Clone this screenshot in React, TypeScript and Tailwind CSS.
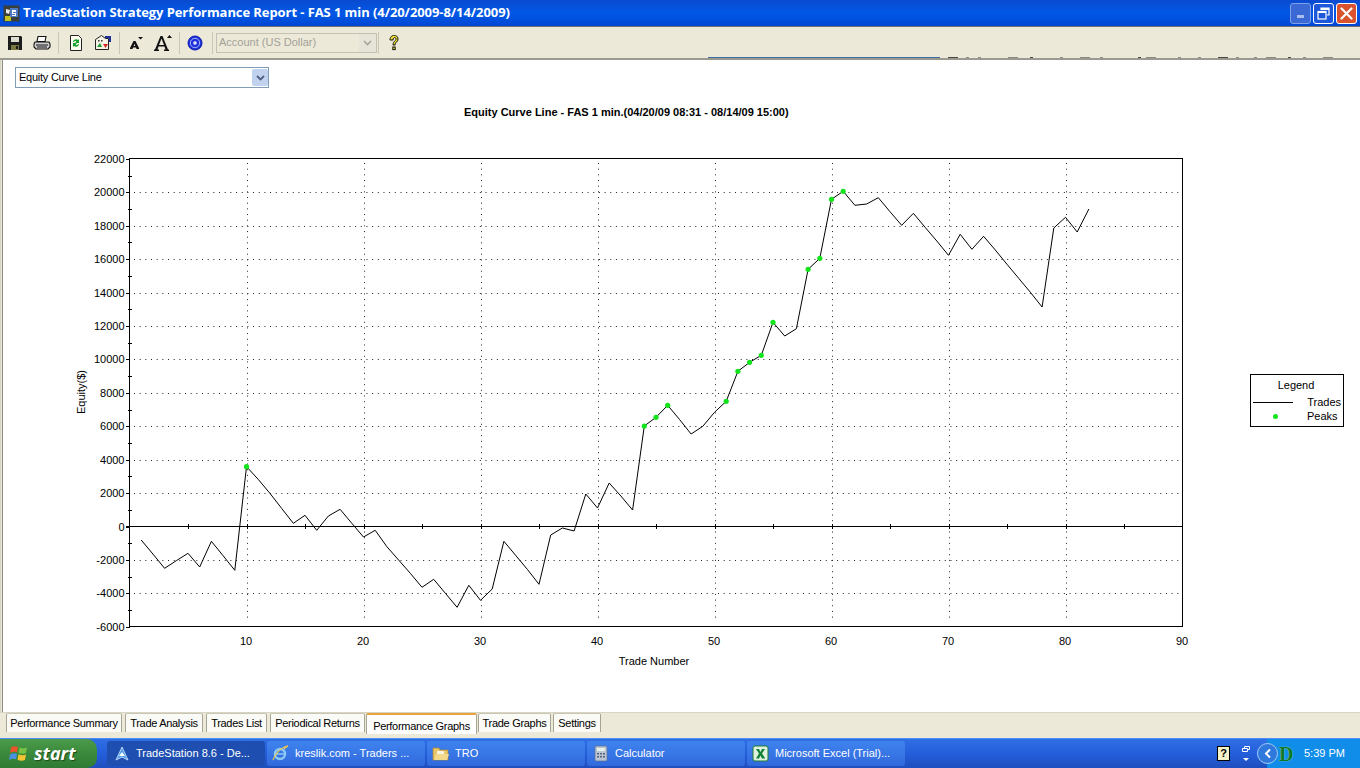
import { Fragment } from "react";

// y pixel of each trade, trade 1 first
const EQUITY = [
  540, 554, 568.3, 560.7, 553.3, 567, 541.3, 555.7, 570.3, 466.7, 479.3, 493.3, 508.3, 523.3, 515.3, 530.3, 516, 509.3,
  523.3, 537, 530.3, 546.7, 560, 573.3, 587.3, 579.3, 593.3, 607.3, 585.3, 600.3, 589, 541.3, 555.3, 569.3, 584.3, 535,
  528, 531, 494, 508, 483, 496, 510, 426, 417.3, 405.3, 419.3, 434, 426.3, 412.3, 401.3, 371.3, 362.3, 355.3, 322.3,
  336, 328.7, 269.3, 258.3, 199.3, 191.3, 205.3, 204, 197.7, 211.7, 225.3, 213.3, 227.3, 241, 255.3, 234.3, 249.3,
  236.3, 250, 264.3, 278.3, 292.3, 307, 228, 217.3, 232, 209,
];
const PEAKS = [10, 44, 45, 46, 51, 52, 53, 54, 55, 58, 59, 60, 61];

const tradeX = (n: number) => 129.5 + n * 11.7;
const equityY = (v: number) => 526.5 - (v * 468) / 28000;

const Y_LABELS = [22000, 20000, 18000, 16000, 14000, 12000, 10000, 8000, 6000, 4000, 2000, 0, -2000, -4000, -6000];
const X_LABELS = [10, 20, 30, 40, 50, 60, 70, 80, 90];
const MINOR = [21000, 19000, 17000, 15000, 13000, 11000, 9000, 7000, 5000, 3000, 1000, -1000, -3000, -5000];

const TABS = [
  { label: "Performance Summary", w: "w-[116px]", ml: "ml-0" },
  { label: "Trade Analysis", w: "w-[78px]", ml: "ml-[3px]" },
  { label: "Trades List", w: "w-[61px]", ml: "ml-[3px]" },
  { label: "Periodical Returns", w: "w-[95px]", ml: "ml-[3px]" },
  { label: "Performance Graphs", w: "w-[111px]", ml: "ml-px", active: true },
  { label: "Trade Graphs", w: "w-[73px]", ml: "ml-px" },
  { label: "Settings", w: "w-[48px]", ml: "ml-[2px]" },
];

function AppIcon() {
  return (
    <svg width="17" height="17" viewBox="0 0 17 17">
      <rect x="0.5" y="0.5" width="16" height="16" fill="#3a3f3a" />
      <rect x="2" y="11" width="6" height="5" fill="#c2c21f" />
      <rect x="7" y="3" width="8" height="9" fill="#4d79c7" />
      <path d="M3 4l4 1-1 4-3-1z" fill="#e8e8e8" />
      <path d="M9 5h4v2h-3v1h3v3H9v-1h3V9H9z" fill="#fff" />
    </svg>
  );
}

function SaveIcon() {
  return (
    <svg width="16" height="16" viewBox="0 0 16 16">
      <path d="M1 1h13l1 1v13H1z" fill="#1c1c1c" />
      <rect x="4" y="2" width="8" height="5" fill="#dcdcd0" />
      <rect x="4" y="10" width="8" height="5" fill="#77773f" />
      <rect x="9" y="11" width="2" height="3" fill="#1c1c1c" />
    </svg>
  );
}

function PrintIcon() {
  return (
    <svg width="18" height="16" viewBox="0 0 18 16" fill="#fff" stroke="#111" strokeWidth="1.1">
      <path d="M5 1.5h8l-1 5H4z" />
      <path d="M2 7h14l1 2v3l-2 2H3l-2-2V9z" fill="#cfcfcf" />
      <path d="M3 10h12M4 12h10" fill="none" />
    </svg>
  );
}

function RefreshDocIcon() {
  return (
    <svg width="16" height="18" viewBox="0 0 16 18">
      <path d="M2.5 1.5h8l3 3v12h-11z" fill="#fdfdf0" stroke="#222" />
      <path d="M5 8a3 3 0 0 1 5-2l1-1v4H7l1.500-1.500A1.500 1.500 0 0 0 6 8z" fill="#17a02c" />
      <path d="M11 10a3 3 0 0 1-5 2l-1 1V9h4l-1.500 1.500A1.500 1.500 0 0 0 10 10z" fill="#17a02c" />
    </svg>
  );
}

function ChartDocIcon() {
  return (
    <svg width="18" height="17" viewBox="0 0 18 17">
      <path d="M1.500 5.500l6-4 4 3h3v11h-13z" fill="#f4f2e4" stroke="#222" />
      <path d="M3 13l3-4 2 4z" fill="#1e9a33" />
      <path d="M9 10h5l-2.500 4z" fill="#d8262b" />
      <rect x="4" y="6" width="1.500" height="1.500" fill="#333" />
      <rect x="7" y="6" width="1.500" height="1.500" fill="#333" />
      <path d="M11 2h6v6h-2V4h-4z" fill="#1c2f9c" />
    </svg>
  );
}

function FontDownIcon() {
  return (
    <svg width="15" height="14" viewBox="0 0 15 14">
      <path d="M1 13h2.500l.500-1.500h3l.500 1.500H10v-1L6.500 5h-2L1 12zM4.700 10 5.500 7.700 6.300 10z" fill="#111" />
      <path d="M9 1h5l-2.500 2.500z" fill="#111" />
    </svg>
  );
}

function FontUpIcon() {
  return (
    <svg width="20" height="18" viewBox="0 0 20 18">
      <path d="M1 17h5v-1.500H4.500l1-3h6l1 3H11V17h5v-1.500h-1L9.500 2h-2L2 15.500H1zM6 11l2.500-6.500L11 11z" fill="#111" />
      <path d="M14 4l2.500-3L19 4z" fill="#111" />
    </svg>
  );
}

function TargetIcon() {
  return (
    <svg width="16" height="16" viewBox="0 0 16 16" fill="none">
      <circle cx="8" cy="8" r="7" fill="#1c2fd8" stroke="#0a1bb0" />
      <circle cx="8" cy="8" r="4.700" stroke="#a9b6f7" />
      <circle cx="8" cy="8" r="2.300" fill="#dfe4ff" stroke="#1c2fd8" />
    </svg>
  );
}

function StartFlag() {
  return (
    <svg width="20" height="19" viewBox="0 0 20 19">
      <path d="M2 3.500Q5 1.500 9 3L8 8.500Q5 7 1 9z" fill="#e8552b" />
      <path d="M10.500 3.500Q14 5 18 3.500L17 9q-4 1.500-7.500-.300z" fill="#76c043" />
      <path d="M1 10.500q4-2 7 -.500L7 15.500q-3-1.500-7 .500z" fill="#4a90e2" />
      <path d="M9.500 10.200q3.500 1.800 7.500.300l-1 5.500q-4 1.500-7.500-.300z" fill="#f4c430" />
    </svg>
  );
}

function TaskIcon({ kind }: { kind: "ts" | "ie" | "folder" | "calc" | "excel" }) {
  if (kind === "ts") {
    return (
      <svg width="16" height="16" viewBox="0 0 16 16">
        <path d="M8 1l6 13-6-3-6 3z" fill="#4f9de8" stroke="#dbe9fb" strokeWidth="0.800" />
        <path d="M8 6l3 4H5z" fill="#fff" />
      </svg>
    );
  }
  if (kind === "ie") {
    return (
      <svg width="17" height="17" viewBox="0 0 17 17" fill="none">
        <circle cx="8" cy="9" r="5" stroke="#8ccaf5" strokeWidth="2.400" />
        <path d="M4 9h8" stroke="#8ccaf5" strokeWidth="1.500" />
        <path d="M1 15C3 9 9 2 16 1c-2 1-3 2-4 3" stroke="#f2c94c" strokeWidth="1.100" />
      </svg>
    );
  }
  if (kind === "folder") {
    return (
      <svg width="17" height="15" viewBox="0 0 17 15">
        <path d="M1 2h6l1 2h8v10H1z" fill="#e9c668" stroke="#a9853a" strokeWidth="0.700" />
        <rect x="5" y="5" width="7" height="6" fill="#f8f4e0" />
        <path d="M2 14l2-6h13l-2 6z" fill="#f3d98b" />
      </svg>
    );
  }
  if (kind === "calc") {
    return (
      <svg width="14" height="17" viewBox="0 0 14 17">
        <rect x="1" y="1" width="12" height="15" rx="1.500" fill="#b9c4d4" stroke="#60708a" strokeWidth="0.700" />
        <rect x="3" y="3" width="8" height="3" fill="#e7f1e8" />
        <path d="M3 8h2v1.500H3zM6 8h2v1.500H6zM9 8h2v1.500H9zM3 11h2v1.500H3zM6 11h2v1.500H6zM9 11h2v1.500H9z" fill="#57657c" />
      </svg>
    );
  }
  return (
    <svg width="17" height="17" viewBox="0 0 17 17">
      <rect x="1" y="1" width="15" height="15" rx="2" fill="#dff2de" stroke="#1e7a34" />
      <path d="M4 4h3l1.500 3L10 4h3l-3 4.500 3.300 5H10L8.500 10.500 7 13.500H4l3-5z" fill="#13803a" />
    </svg>
  );
}

function TaskButton({ icon, label, active }: { icon: "ts" | "ie" | "folder" | "calc" | "excel"; label: string; active?: boolean }) {
  return (
    <div
      className={`h-[25px] w-[158px] rounded-[3px] flex items-center gap-[6px] text-[11px] text-white ${
        active ? "bg-[#1e4fb0] pl-[6px]" : "bg-gradient-to-b from-[#3f83ee] to-[#3169dd] pl-[5px]"
      }`}
    >
      <div className="w-[17px] flex justify-center">
        <TaskIcon kind={icon} />
      </div>
      <span className="whitespace-nowrap">{label}</span>
    </div>
  );
}

function EquityChart() {
  const line = EQUITY.map((y, i) => `${tradeX(i + 1)},${y}`).join(" ");
  return (
    <svg width="1180" height="520" viewBox="60 150 1180 520" className="block shrink-0" fontFamily="'Liberation Sans', sans-serif" fontSize="11">
      {/* dotted grid */}
      {Y_LABELS.slice(1, -1)
        .filter((v) => v !== 0)
        .map((v) => (
          <line key={v} x1="134" x2="1182" y1={Math.round(equityY(v)) + 0.5} y2={Math.round(equityY(v)) + 0.5} stroke="#222" strokeDasharray="1 4.670" />
        ))}
      {X_LABELS.slice(0, -1).map((n) => (
        <line key={n} x1={Math.round(tradeX(n)) + 0.5} x2={Math.round(tradeX(n)) + 0.5} y1="163" y2="622" stroke="#222" strokeDasharray="1 4.670" />
      ))}

      {/* ticks */}
      {Y_LABELS.map((v) => (
        <line key={v} x1="126" x2="130" y1={Math.round(equityY(v)) + 0.5} y2={Math.round(equityY(v)) + 0.5} stroke="#000" />
      ))}
      {MINOR.map((v) => (
        <line key={v} x1="128" x2="132" y1={Math.round(equityY(v)) + 0.5} y2={Math.round(equityY(v)) + 0.5} stroke="#000" />
      ))}
      {[5, 10, 15, 20, 25, 30, 35, 40, 45, 50, 55, 60, 65, 70, 75, 80, 85].map((n) => (
        <line key={n} x1={Math.round(tradeX(n)) + 0.5} x2={Math.round(tradeX(n)) + 0.5} y1="524" y2="529" stroke="#000" />
      ))}

      <line x1="126" x2="1182" y1="526.5" y2="526.5" stroke="#000" />
      <rect x="129.500" y="158.500" width="1053" height="468" fill="none" stroke="#000" />

      <polyline points={line} fill="none" stroke="#000" strokeWidth="1" />
      {PEAKS.map((n) => (
        <circle key={n} cx={tradeX(n)} cy={EQUITY[n - 1]} r="2.600" fill="#12e41c" />
      ))}

      {Y_LABELS.map((v) => (
        <text key={v} x="124.500" y={equityY(v) + 4} textAnchor="end" fill="#000">
          {v}
        </text>
      ))}
      {X_LABELS.map((n) => (
        <text key={n} x={tradeX(n) - 0.5} y="645" textAnchor="middle" fill="#000">
          {n}
        </text>
      ))}
      <text x="654" y="665" textAnchor="middle" fill="#000">
        Trade Number
      </text>
      <text x="0" y="0" textAnchor="middle" fill="#000" transform="translate(85 392) rotate(-90)">
        Equity($)
      </text>
    </svg>
  );
}

export default function App() {
  return (
    <div className="w-[1360px] h-[768px] overflow-hidden flex flex-col bg-white text-black font-['Liberation_Sans',sans-serif]">
      {/* title bar */}
      <div className="h-[26px] shrink-0 flex items-center pl-[3px] pr-[3px] bg-gradient-to-b from-[#0a4ad0] via-[#0158e6] to-[#0047d4]">
        <AppIcon />
        <span className="ml-[3px] text-[13px] font-bold text-white whitespace-nowrap font-['Open_Sans',sans-serif] tracking-[-0.08px]">
          TradeStation Strategy Performance Report - FAS 1 min (4/20/2009-8/14/2009)
        </span>
        <div className="ml-auto flex items-center gap-[2px]">
          <div className="w-[21px] h-[21px] rounded-[3px] border border-[#7f9fe6] bg-[#3a69d6] flex items-end pl-[6px] pb-[5px]">
            <div className="w-[7px] h-[3px] bg-[#a9bdf0]" />
          </div>
          <div className="w-[21px] h-[21px] rounded-[3px] border border-white bg-[#1d57da] flex items-center justify-center">
            <svg width="13" height="13" viewBox="0 0 13 13" fill="none" stroke="#fff" strokeWidth="1.200">
              <path d="M4 3V1h8v7h-2" />
              <path d="M4 2h8" strokeWidth="2" />
              <rect x="1" y="4.500" width="8" height="7.500" />
              <path d="M1 5h8" strokeWidth="2" />
            </svg>
          </div>
          <div className="w-[21px] h-[21px] rounded-[3px] border border-white bg-[#d9532e] flex items-center justify-center">
            <svg width="13" height="13" viewBox="0 0 13 13" stroke="#fff" strokeWidth="2.200" strokeLinecap="round">
              <path d="M1.500 1.500l10 10M11.500 1.500l-10 10" />
            </svg>
          </div>
        </div>
      </div>

      {/* toolbar */}
      <div className="relative h-[34px] shrink-0 flex items-center bg-[#ece9d8] border-t border-[#70706a] border-b-2 border-b-[#9a9a90]">
        <div className="ml-[7px] w-[16px] flex justify-center"><SaveIcon /></div>
        <div className="ml-[10px] w-[18px] flex justify-center"><PrintIcon /></div>
        <div className="ml-[7px] w-px h-[22px] bg-[#c9c6b4]" />
        <div className="ml-[9px] w-[16px] flex justify-center"><RefreshDocIcon /></div>
        <div className="ml-[10px] w-[18px] flex justify-center"><ChartDocIcon /></div>
        <div className="ml-[7px] w-px h-[22px] bg-[#c9c6b4]" />
        <div className="ml-[7px] w-[18px] flex justify-center"><FontDownIcon /></div>
        <div className="ml-[8px] w-[20px] flex justify-center"><FontUpIcon /></div>
        <div className="ml-[6px] w-px h-[22px] bg-[#c9c6b4]" />
        <div className="ml-[7px] w-[16px] flex justify-center"><TargetIcon /></div>
        <div className="ml-[9px] w-px h-[22px] bg-[#c9c6b4]" />
        <div className="ml-[3px] w-[161px] h-[20px] border border-[#c3c1b3] bg-[#ece9d8] flex items-center pl-[2px] text-[11px] text-[#a3a198]">
          <span className="whitespace-nowrap">Account (US Dollar)</span>
          <div className="ml-auto w-[17px] h-[18px] bg-[#e6e4d8] flex items-center justify-center">
            <svg width="9" height="6" viewBox="0 0 9 6" fill="none" stroke="#a8a69c" strokeWidth="1.600"><path d="M1 1l3.500 3.500L8 1" /></svg>
          </div>
        </div>
        <div className="ml-px w-px h-[22px] bg-[#c9c6b4]" />
        <svg className="ml-[10px]" width="10" height="16" viewBox="0 0 10 16" fill="#f6e332" stroke="#111" strokeWidth="1">
          <path d="M1 5c0-6 8-6 8-1 0 3-3 3-3 6H4c0-4 3-4 3-6s-3-2-3 1z" />
          <rect x="3.800" y="12" width="2.400" height="2.600" />
        </svg>
        {/* leftovers of a window behind, clipped at the toolbar's lower edge */}
        <svg className="absolute left-[708px] bottom-0" width="640" height="1" viewBox="0 0 640 1">
          <rect x="0" y="0" width="232" height="1" fill="#3c6f9f" />
          {[240, 258, 270, 300, 322, 352, 372, 392, 430, 438, 470, 490, 510, 528, 546, 558, 580, 595, 615].map((x, i) => (
            <rect key={x} x={x} y="0" width={i % 3 === 0 ? 10 : 3} height="1" fill={i % 4 === 0 ? "#444" : "#8a8a80"} />
          ))}
        </svg>
      </div>

      {/* report */}
      <div className="flex-1 min-h-0 flex flex-col bg-white border-l-[3px] border-l-[#ece9d8] relative">
        <div className="absolute left-[-3px] top-0 bottom-0 w-[3px] border-l border-[#d6d3c2] border-r border-r-[#8a8a80]" />
        <div className="mt-[7px] ml-[12px] w-[254px] h-[21px] border border-[#7f9db9] flex items-center pl-[3px] text-[11px] tracking-[-0.25px]">
          <span>Equity Curve Line</span>
          <div className="ml-auto w-[16px] h-[17px] rounded-[2px] bg-[#c1d2ee] flex items-center justify-center">
            <svg width="9" height="6" viewBox="0 0 9 6" fill="none" stroke="#4d6185" strokeWidth="1.800"><path d="M1 1l3.500 3.500L8 1" /></svg>
          </div>
        </div>
        <div className="mt-[16px] ml-[461px] h-[16px] text-[11px] font-bold leading-[16px] whitespace-nowrap">
          Equity Curve Line - FAS 1 min.(04/20/09 08:31 - 08/14/09 15:00)
        </div>
        <div className="mt-[30px] flex items-start">
          <div className="ml-[57px]">
            <EquityChart />
          </div>
          <div className="ml-[10px] mt-[224px] w-[94px] h-[53px] border border-black px-[2px] text-[11px]">
            <div className="text-center leading-[20px] pr-[2px]">Legend</div>
            <div className="flex items-center h-[14px]">
              <div className="w-[42px] h-px bg-black" />
              <span className="ml-[14px]">Trades</span>
            </div>
            <div className="flex items-center h-[14px]">
              <div className="ml-[20px] w-[5px] h-[5px] rounded-full bg-[#12e41c]" />
              <span className="ml-[29px]">Peaks</span>
            </div>
          </div>
        </div>
      </div>

      {/* tab strip */}
      <div className="h-[26px] shrink-0 flex items-start pl-[6px] bg-[#ece9d8] border-t border-[#d8d5c4]">
        {TABS.map((t) => (
          <Fragment key={t.label}>
            <div
              className={`${t.w} ${t.ml} flex items-center justify-center whitespace-nowrap text-[11px] tracking-[-0.3px] rounded-t-[2px] border-x border-[#a6a493] ${
                t.active
                  ? "h-[21px] bg-white border-t-2 border-t-[#e8a33d] pt-[3px]"
                  : "h-[19px] bg-[#fafaf6] border-t border-t-[#c9c6b4]"
              }`}
            >
              {t.label}
            </div>
          </Fragment>
        ))}
      </div>

      {/* taskbar */}
      <div className="h-[30px] shrink-0 flex items-center bg-gradient-to-b from-[#2f6fe4] via-[#245edb] to-[#1f4fbe] border-t border-[#4e8df5]">
        <div className="w-[97px] h-full flex items-center pl-[9px] gap-[5px] rounded-r-[10px] bg-gradient-to-b from-[#4c9a4c] via-[#3a8a3c] to-[#2f7a33]">
          <StartFlag />
          <span className="text-[18px] font-bold italic text-white font-['Open_Sans',sans-serif] [text-shadow:1px_1px_1px_#1a4a1a]">start</span>
        </div>
        <div className="ml-[10px] flex gap-[2px]">
          <TaskButton icon="ts" label="TradeStation 8.6 - De..." active />
          <TaskButton icon="ie" label="kreslik.com - Traders ..." />
          <TaskButton icon="folder" label="TRO" />
          <TaskButton icon="calc" label="Calculator" />
          <TaskButton icon="excel" label="Microsoft Excel (Trial)..." />
        </div>
        <div className="ml-auto flex items-center h-full">
          <div className="w-[13px] h-[15px] bg-[#f7f3c8] border border-black flex items-center justify-center text-[11px] font-bold leading-none">?</div>
          <svg className="ml-[11px]" width="10" height="18" viewBox="0 0 10 18" fill="none" stroke="#fff">
            <path d="M3.500 3.500V1.500h5v3H6M1.500 3.500h5v3h-5z" />
            <path d="M2 13h6l-3 3z" fill="#fff" stroke="none" />
          </svg>
          <div className="ml-[16px] w-[93px] h-full bg-[#0f8de8] flex items-center relative">
            <div className="absolute left-[-10px] w-[21px] h-[21px] rounded-full bg-[#2f78dc] border border-[#a9cdf7] flex items-center justify-center">
              <svg width="8" height="11" viewBox="0 0 8 11" fill="none" stroke="#fff" strokeWidth="2"><path d="M6 1.500L2 5.500l4 4" /></svg>
            </div>
            <span className="ml-[12px] w-[15px] text-[20px] font-bold text-[#0b7a25] leading-none font-['Liberation_Serif',serif] [text-shadow:0_0_1px_#d6f7d6]">D</span>
            <span className="ml-[10px] text-[11px] text-white whitespace-nowrap">5:39 PM</span>
          </div>
        </div>
      </div>
    </div>
  );
}
